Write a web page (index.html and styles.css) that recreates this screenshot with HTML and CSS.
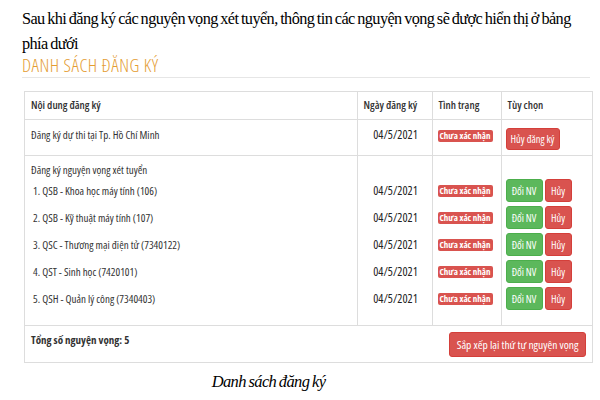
FILE: index.html
```html
<!DOCTYPE html>
<html lang="vi">
<head>
<meta charset="utf-8">
<title>Danh sách đăng ký</title>
<link rel="stylesheet" href="styles.css">
</head>
<body>
<div class="page">
  <p class="intro">Sau khi đăng ký các nguyện vọng xét tuyển, thông tin các nguyện vọng sẽ được hiển thị ở bảng phía dưới</p>
  <h2 class="title">DANH SÁCH ĐĂNG KÝ</h2>
  <div class="panel">
    <table class="reg">
      <colgroup>
        <col class="c-content">
        <col class="c-date">
        <col class="c-status">
        <col class="c-opt">
      </colgroup>
      <thead>
        <tr>
          <th>Nội dung đăng ký</th>
          <th>Ngày đăng ký</th>
          <th>Tình trạng</th>
          <th>Tùy chọn</th>
        </tr>
      </thead>
      <tbody>
        <tr class="row-exam">
          <td>Đăng ký dự thi tại Tp. Hồ Chí Minh</td>
          <td class="date">04/5/2021</td>
          <td class="status"><span class="badge">Chưa xác nhận</span></td>
          <td class="opt"><button class="btn btn-red btn-wide">Hủy đăng ký</button></td>
        </tr>
        <tr class="row-wish">
          <td>
            <div class="group-title">Đăng ký nguyện vọng xét tuyển</div>
            <ul class="lines items">
              <li class="line">1. QSB - Khoa học máy tính (106)</li>
              <li class="line">2. QSB - Kỹ thuật máy tính (107)</li>
              <li class="line">3. QSC - Thương mại điện tử (7340122)</li>
              <li class="line">4. QST - Sinh học (7420101)</li>
              <li class="line">5. QSH - Quản lý công (7340403)</li>
            </ul>
          </td>
          <td class="date stack">
            <ul class="lines">
              <li class="line center">04/5/2021</li>
              <li class="line center">04/5/2021</li>
              <li class="line center">04/5/2021</li>
              <li class="line center">04/5/2021</li>
              <li class="line center">04/5/2021</li>
            </ul>
          </td>
          <td class="status stack">
            <ul class="lines">
              <li class="line"><span class="badge">Chưa xác nhận</span></li>
              <li class="line"><span class="badge">Chưa xác nhận</span></li>
              <li class="line"><span class="badge">Chưa xác nhận</span></li>
              <li class="line"><span class="badge">Chưa xác nhận</span></li>
              <li class="line"><span class="badge">Chưa xác nhận</span></li>
            </ul>
          </td>
          <td class="opt stack">
            <ul class="lines">
              <li class="line btns"><button class="btn btn-green btn-change">Đổi NV</button><button class="btn btn-red btn-cancel">Hủy</button></li>
              <li class="line btns"><button class="btn btn-green btn-change">Đổi NV</button><button class="btn btn-red btn-cancel">Hủy</button></li>
              <li class="line btns"><button class="btn btn-green btn-change">Đổi NV</button><button class="btn btn-red btn-cancel">Hủy</button></li>
              <li class="line btns"><button class="btn btn-green btn-change">Đổi NV</button><button class="btn btn-red btn-cancel">Hủy</button></li>
              <li class="line btns"><button class="btn btn-green btn-change">Đổi NV</button><button class="btn btn-red btn-cancel">Hủy</button></li>
            </ul>
          </td>
        </tr>
      </tbody>
    </table>
    <div class="foot">
      <span class="total">Tổng số nguyện vọng: 5</span>
      <button class="btn btn-red btn-sort">Sắp xếp lại thứ tự nguyện vọng</button>
    </div>
  </div>
  <p class="caption">Danh sách đăng ký</p>
</div>
</body>
</html>
```

FILE: styles.css
```css
html, body {
  margin: 0;
  padding: 0;
  background: #ffffff;
}

.page {
  width: 600px;
  font-family: "Open Sans", "Liberation Sans", Arial, sans-serif;
  font-stretch: 75%;
  color: #333333;
}

.intro {
  margin: 0;
  padding: 6px 12px 0 22px;
  font-family: "Liberation Serif", "Times New Roman", serif;
  font-stretch: normal;
  font-size: 16.3px;
  letter-spacing: -0.58px;
  word-spacing: -1px;
  line-height: 25px;
  color: #000000;
}

.title {
  margin: 0 0 0 22px;
  width: 568px;
  padding: 0 0 4px 0;
  font-size: 18.5px;
  letter-spacing: 0.5px;
  line-height: 17px;
  font-weight: 300;
  color: #e49c32;
  border-bottom: 1px solid #e6e6e6;
}

.panel {
  box-sizing: border-box;
  margin: 13px 0 0 24px;
  width: 569px;
  border: 1px solid #dddddd;
}

.reg {
  width: 567px;
  border-collapse: collapse;
  table-layout: fixed;
  font-size: 11px;
  line-height: 14px;
}

.c-content { width: 332px; }
.c-date { width: 75px; }
.c-status { width: 69px; }
.c-opt { width: 91px; }

.reg th,
.reg td {
  border-left: 1px solid #dddddd;
  border-bottom: 1px solid #dddddd;
  vertical-align: top;
  text-align: left;
}

.reg th:first-child,
.reg td:first-child {
  border-left: none;
}

.reg th {
  padding: 6px 6px 7px 6px;
  font-weight: 600;
  color: #333333;
  white-space: nowrap;
}

.row-exam td {
  padding: 8px 6px 5px 6px;
}

.row-wish td {
  padding: 7px 6px 13px 6px;
}

.row-wish td.stack {
  padding-top: 21px;
}

.reg td.status {
  padding-left: 5px;
  padding-right: 3px;
}

.reg td.opt {
  padding-left: 4px;
  padding-right: 3px;
}

.reg td.date {
  text-align: center;
  font-size: 12px;
  color: #222222;
  padding-left: 3px;
  padding-right: 1px;
}

.group-title {
  height: 14px;
}

.lines {
  list-style: none;
  margin: 0;
  padding: 0;
}

.line {
  height: 27px;
  display: flex;
  align-items: center;
}

.line.center {
  justify-content: center;
}

.items .line {
  padding-left: 2px;
}

.btns {
  gap: 2px;
}

.badge {
  display: inline-block;
  box-sizing: border-box;
  width: 55px;
  height: 12px;
  line-height: 12px;
  text-align: center;
  font-size: 9px;
  font-weight: 700;
  color: #ffffff;
  background: #d9534f;
  border-radius: 2px;
  white-space: nowrap;
}

.row-exam .badge {
  margin-top: 1px;
}

.btn {
  box-sizing: border-box;
  display: inline-flex;
  align-items: center;
  justify-content: center;
  padding: 0;
  margin: 0;
  font-family: "Open Sans", "Liberation Sans", Arial, sans-serif;
  font-stretch: 75%;
  font-size: 10.5px;
  color: #ffffff;
  border: 1px solid transparent;
  border-radius: 3px;
  white-space: nowrap;
}

.btn-red {
  background: #d9534f;
  border-color: #d43f3a;
}

.btn-green {
  background: #5cb85c;
  border-color: #4cae4c;
}

.btn-wide {
  width: 54px;
  height: 22px;
}

.btn-change {
  width: 37px;
  height: 23px;
}

.btn-cancel {
  width: 27px;
  height: 23px;
}

.foot {
  display: flex;
  justify-content: space-between;
  align-items: flex-start;
  padding: 6px 6px 5px 6px;
}

.total {
  margin-top: 1px;
  font-size: 11px;
  line-height: 14px;
  font-weight: 700;
  color: #333333;
}

.btn-sort {
  width: 137px;
  height: 25px;
  font-size: 11.5px;
}

.caption {
  margin: 7px 0 0 0;
  width: 537px;
  text-align: center;
  font-family: "Liberation Serif", "Times New Roman", serif;
  font-stretch: normal;
  font-style: italic;
  font-size: 16.5px;
  letter-spacing: -0.6px;
  word-spacing: -1px;
  line-height: 24px;
  color: #000000;
}
```
